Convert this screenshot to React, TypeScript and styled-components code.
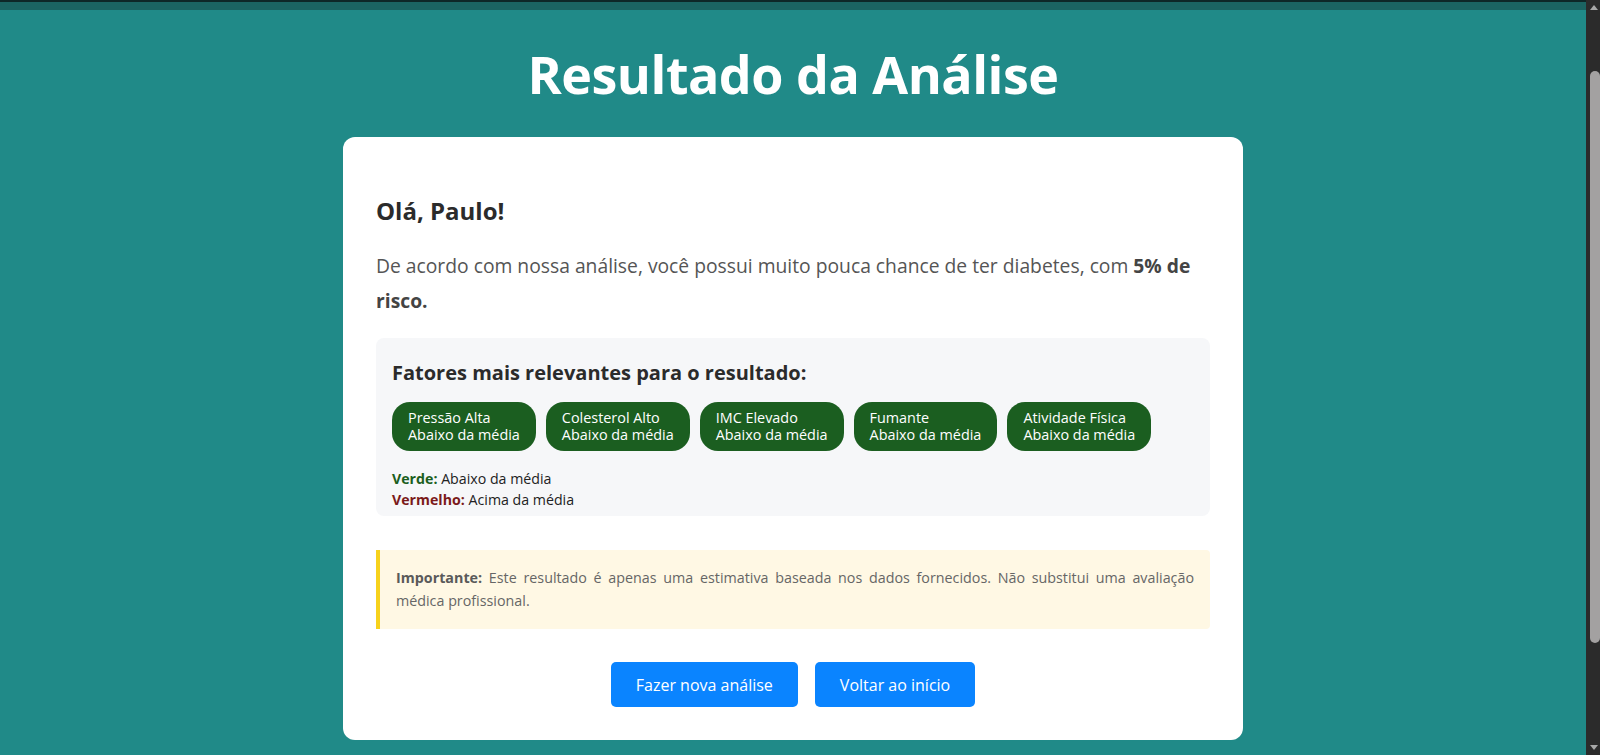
import React from "react";
import styled, { createGlobalStyle } from "styled-components";

const GlobalStyle = createGlobalStyle`
  body {
    margin: 0;
    background: #208a88;
    font-family: "Open Sans", "Noto Sans", sans-serif;
  }
`;

type Factor = {
  name: string;
  level: string;
};

const factors: Factor[] = [
  { name: "Pressão Alta", level: "Abaixo da média" },
  { name: "Colesterol Alto", level: "Abaixo da média" },
  { name: "IMC Elevado", level: "Abaixo da média" },
  { name: "Fumante", level: "Abaixo da média" },
  { name: "Atividade Física", level: "Abaixo da média" },
];

const Shell = styled.div`
  display: flex;
  height: 100vh;
  overflow: hidden;
`;

const Viewport = styled.div`
  flex: 1;
  min-width: 0;
`;

// fake browser scrollbar, as in the screenshot
const ScrollTrack = styled.aside`
  width: 14px;
  flex-shrink: 0;
  background: #2b2b2b;
  display: flex;
  flex-direction: column;
  align-items: center;
`;

const ScrollArrow = styled.div<{ $dir: "up" | "down" }>`
  width: 0;
  height: 0;
  margin: ${(p) => (p.$dir === "up" ? "5px 0 0 2px" : "auto 0 5px 2px")};
  border-left: 4px solid transparent;
  border-right: 4px solid transparent;
  ${(p) =>
    p.$dir === "up"
      ? "border-bottom: 5px solid #a8a8a8;"
      : "border-top: 5px solid #a8a8a8;"}
`;

const ScrollThumb = styled.div`
  width: 10px;
  height: 572px;
  margin: 61px 0 0 3px;
  border-radius: 5px;
  background: #a3a1a1;
`;

const TopStrip = styled.div`
  height: 10px;
  background: #1b6462;
  border-top: 2px solid #0e2727;
  box-sizing: border-box;
`;

const Page = styled.main`
  padding: 29px 0 0;
`;

const Title = styled.h1`
  margin: 0 0 28px;
  text-align: center;
  color: #ffffff;
  font-size: 52px;
  line-height: 70px;
  font-weight: 700;
  letter-spacing: -0.5px;
`;

const Card = styled.section`
  width: 900px;
  margin: 0 auto;
  box-sizing: border-box;
  background: #ffffff;
  border-radius: 12px;
  padding: 32px 33px 33px;
`;

const Greeting = styled.h2`
  margin: 27px 0 22px;
  font-size: 24px;
  line-height: 30px;
  font-weight: 700;
  color: #2b2b2b;
`;

const Summary = styled.p`
  margin: 0 0 20px;
  font-size: 19.3px;
  line-height: 35px;
  color: #555555;

  strong {
    color: #444444;
  }
`;

const FactorsBox = styled.div`
  background: #f6f7f9;
  border-radius: 8px;
  padding: 23px 16px 6px;
`;

const FactorsTitle = styled.h3`
  margin: 0 0 17px;
  font-size: 20px;
  line-height: 24px;
  font-weight: 700;
  color: #2b2b2b;
`;

const PillRow = styled.div`
  display: flex;
  flex-wrap: wrap;
  gap: 10px;
  margin-bottom: 17px;
`;

const Pill = styled.div`
  display: flex;
  flex-direction: column;
  background: #1b5e20;
  color: #ffffff;
  border-radius: 18px;
  padding: 8px 16px;
  font-size: 14.4px;
  line-height: 16.5px;
`;

const Legend = styled.div`
  font-size: 14.2px;
  line-height: 21px;
  color: #222222;
`;

const LegendLabel = styled.strong<{ $tone: "green" | "red" }>`
  color: ${(p) => (p.$tone === "green" ? "#1b5e20" : "#7b1a1a")};
`;

const Notice = styled.div`
  margin-top: 34px;
  background: #fff8e4;
  border-left: 4px solid #f7d21c;
  border-radius: 0 4px 4px 0;
  padding: 16px 16px 17px;
  font-size: 14.3px;
  line-height: 23px;
  color: #666666;
  text-align: justify;

  strong {
    color: #5a5a5a;
  }
`;

const Actions = styled.div`
  display: flex;
  justify-content: center;
  gap: 17px;
  margin-top: 33px;
`;

const ActionButton = styled.button`
  height: 45px;
  padding: 0 25px;
  border: none;
  border-radius: 5px;
  background: #0a84ff;
  color: #ffffff;
  font-family: inherit;
  font-size: 16px;
  cursor: pointer;
`;

const App: React.FC = () => {
  return (
    <>
      <GlobalStyle />
      <Shell>
        <Viewport>
          <TopStrip />
          <Page>
            <Title>Resultado da Análise</Title>
            <Card>
              <Greeting>Olá, Paulo!</Greeting>
              <Summary>
                De acordo com nossa análise, você possui muito pouca chance de
                ter diabetes, com <strong>5% de risco.</strong>
              </Summary>

              <FactorsBox>
                <FactorsTitle>
                  Fatores mais relevantes para o resultado:
                </FactorsTitle>
                <PillRow>
                  {factors.map((f) => (
                    <Pill key={f.name}>
                      <span>{f.name}</span>
                      <span>{f.level}</span>
                    </Pill>
                  ))}
                </PillRow>
                <Legend>
                  <div>
                    <LegendLabel $tone="green">Verde:</LegendLabel> Abaixo da
                    média
                  </div>
                  <div>
                    <LegendLabel $tone="red">Vermelho:</LegendLabel> Acima da
                    média
                  </div>
                </Legend>
              </FactorsBox>

              <Notice>
                <strong>Importante:</strong> Este resultado é apenas uma
                estimativa baseada nos dados fornecidos. Não substitui uma
                avaliação médica profissional.
              </Notice>

              <Actions>
                <ActionButton>Fazer nova análise</ActionButton>
                <ActionButton>Voltar ao início</ActionButton>
              </Actions>
            </Card>
          </Page>
        </Viewport>
        <ScrollTrack>
          <ScrollArrow $dir="up" />
          <ScrollThumb />
          <ScrollArrow $dir="down" />
        </ScrollTrack>
      </Shell>
    </>
  );
};

export default App;
